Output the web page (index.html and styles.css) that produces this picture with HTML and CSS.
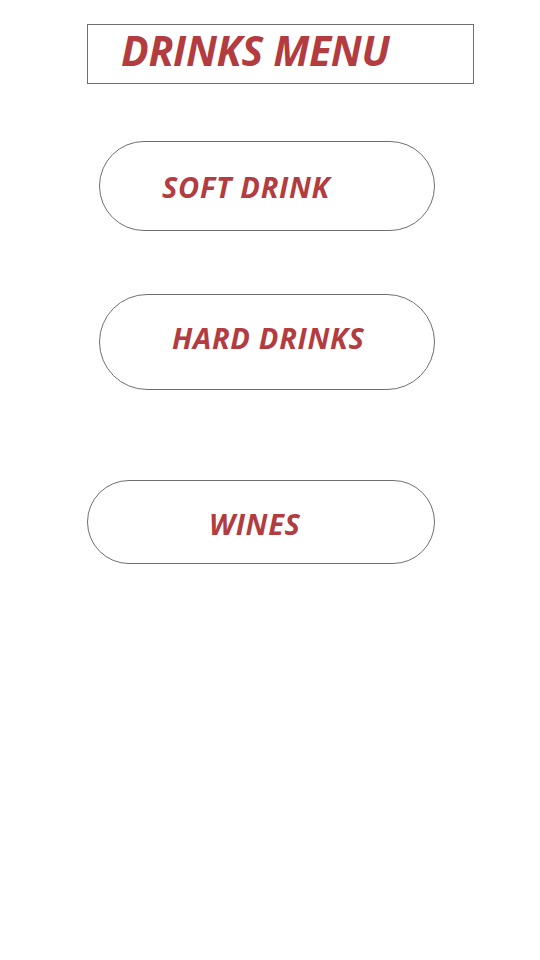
FILE: index.html
```html
<!DOCTYPE html>
<html>
<head>
<meta charset="utf-8">
<link rel="stylesheet" href="styles.css">
</head>
<body>
<div class="page">
  <header class="title-box"><h1 class="title">DRINKS MENU</h1></header>
  <nav class="menu">
    <button class="pill pill-soft">SOFT DRINK</button>
    <button class="pill pill-hard">HARD DRINKS</button>
    <button class="pill pill-wine">WINES</button>
  </nav>
</div>
</body>
</html>
```
FILE: styles.css
```css
html, body {
  margin: 0;
  padding: 0;
  background: #ffffff;
}
.page {
  width: 540px;
  height: 960px;
  display: flex;
  flex-direction: column;
  font-family: "Open Sans", "Noto Sans", sans-serif;
}
.title-box {
  box-sizing: border-box;
  margin: 24px 0 0 87px;
  width: 387px;
  height: 60px;
  border: 1px solid #6f6f6f;
  display: flex;
  align-items: center;
  padding-left: 33px;
  padding-bottom: 7px;
}
.title {
  margin: 0;
  font-size: 41px;
  font-weight: 700;
  font-style: italic;
  color: #b23c3f;
  letter-spacing: -0.3px;
  line-height: 1;
}
.menu {
  display: flex;
  flex-direction: column;
}
.pill {
  box-sizing: border-box;
  background: #ffffff;
  border: 1px solid #6f6f6f;
  border-radius: 50px;
  font-family: inherit;
  font-size: 29px;
  font-weight: 700;
  font-style: italic;
  color: #b23c3f;
  letter-spacing: 0.7px;
  display: flex;
  align-items: center;
  padding: 0;
  cursor: pointer;
  line-height: 1;
}
.pill-soft {
  margin: 57px 0 0 99px;
  width: 336px;
  height: 90px;
  padding-left: 62px;
}
.pill-hard {
  margin: 63px 0 0 99px;
  width: 336px;
  height: 96px;
  padding-left: 72px;
  padding-bottom: 10px;
}
.pill-wine {
  margin: 90px 0 0 87px;
  width: 348px;
  height: 84px;
  padding-left: 121px;
  padding-top: 3px;
}
```
